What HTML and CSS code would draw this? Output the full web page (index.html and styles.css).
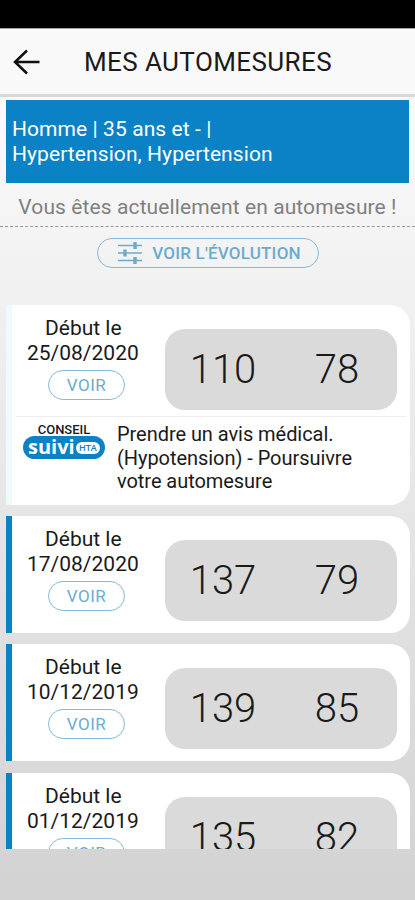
FILE: index.html
```html
<!DOCTYPE html>
<html lang="fr">
<head>
  <meta charset="UTF-8">
  <title>Mes automesures</title>
  <meta name="viewport" content="width=device-width, initial-scale=1.0">
  <link rel="stylesheet" href="styles.css">
</head>
<body>
  <div class="status-bar"></div>

  <!-- Header -->
  <header class="header">
    <svg class="back" viewBox="0 0 28 28" width="28" height="28">
      <path d="M27.500 14H3M15 2.500L3 14L15 25.500" fill="none" stroke="#111" stroke-width="2.500"/>
    </svg>
    <h1>MES AUTOMESURES</h1>
  </header>

  <!-- Patient profile -->
  <div class="profile">Homme | 35 ans et - |<br><span>Hypertension, Hypertension</span></div>
  <p class="notice">Vous êtes actuellement en automesure !</p>

  <div class="evolution">
    <button class="btn btn-evolution">
      <svg viewBox="0 0 24 24" width="24" height="24" stroke="currentColor" fill="none">
        <path d="M0 4.500H24M0 12H24M0 19.500H24" stroke-width="1.600"/>
        <path d="M17 1V8M7 8.500V15.500M17 16V23" stroke-width="3.400"/>
      </svg>
      <span>VOIR L'ÉVOLUTION</span>
    </button>
  </div>

  <!-- Measure list -->
  <main class="list">
    <div class="card current">
      <div class="measure">
        <div class="date">Début le<br><span>25/08/2020</span><button class="btn">VOIR</button></div>
        <div class="values"><span>110</span><span>78</span></div>
      </div>
      <div class="advice">
        <div class="logo">
          <div class="logo-top">CONSEIL</div>
          <div class="logo-name">suivi<span>HTA</span></div>
        </div>
        <p>Prendre un avis médical.<br>(Hypotension) - Poursuivre<br>votre automesure</p>
      </div>
    </div>

    <div class="card">
      <div class="measure">
        <div class="date">Début le<br><span>17/08/2020</span><button class="btn">VOIR</button></div>
        <div class="values"><span>137</span><span>79</span></div>
      </div>
    </div>

    <div class="card">
      <div class="measure">
        <div class="date">Début le<br><span>10/12/2019</span><button class="btn">VOIR</button></div>
        <div class="values"><span>139</span><span>85</span></div>
      </div>
    </div>

    <div class="card">
      <div class="measure">
        <div class="date">Début le<br><span>01/12/2019</span><button class="btn">VOIR</button></div>
        <div class="values"><span>135</span><span>82</span></div>
      </div>
    </div>
  </main>
</body>
</html>
```
FILE: styles.css
```css
* {
  box-sizing: border-box;
}
body {
  margin: 0;
  height: 900px;
  overflow: hidden;
  font-family: Roboto, sans-serif;
  color: #1a1a1a;
  background: linear-gradient(#fafafa 95px, #f3f3f3 250px, #d2d2d2 900px);
}
.status-bar {
  height: 28px;
  background: #000;
}

/* Header */
.header {
  display: flex;
  align-items: center;
  height: 69px;
  padding-left: 12px;
  background: #f9f9f9;
  border-top: 1px solid #a5a5a5;
  border-bottom: 3px solid #d8d8d8;
}
.header h1 {
  margin: 0 0 0 44px;
  font-size: 26px;
  font-weight: 400;
  letter-spacing: 0.400px;
}

/* Profile */
.profile {
  height: 83px;
  margin: 3px 6px 0;
  padding: 17px 6px;
  font-size: 21px;
  line-height: 25px;
  letter-spacing: 0.080px;
  color: #fff;
  background: #0a82c5;
}
.notice {
  height: 44px;
  margin: 0;
  padding-top: 12px;
  text-align: center;
  white-space: nowrap;
  font-size: 21px;
  line-height: 25px;
  letter-spacing: 0.100px;
  color: #808080;
  border-bottom: 1px dashed #999;
}
.evolution {
  height: 78px;
  padding-top: 11px;
  text-align: center;
}

/* Buttons */
.btn {
  display: block;
  width: 77px;
  height: 30px;
  margin: 4px 0 0 36px;
  padding: 0;
  font-family: inherit;
  font-size: 17px;
  letter-spacing: 0.500px;
  color: #6cabcf;
  background: none;
  border: 1px solid #85b9d5;
  border-radius: 15px;
}
.btn-evolution {
  display: flex;
  align-items: center;
  justify-content: center;
  gap: 10px;
  width: 222px;
  margin: 0 0 0 97px;
  padding-left: 3px;
  font-weight: 500;
  letter-spacing: 0.200px;
}

/* Cards */
.list {
  height: 544px;
  overflow: hidden;
}
.card {
  margin: 0 5.500px 11.500px 6px;
  background: #fff;
  border-left: 6px solid #0a82c5;
  border-radius: 0 20px 20px 0;
}
.current {
  height: 199.500px;
  border-left-color: #effafc;
}
.measure {
  display: flex;
  height: 116.900px;
}
.current .measure {
  height: 111px;
}
.date {
  width: 153px;
  padding-top: 11px;
  font-size: 21px;
  line-height: 25px;
  text-indent: 33px;
}
.date span {
  display: block;
  text-indent: 15px;
}
.date br {
  display: none;
}
.date .btn {
  text-indent: 0;
}
.values {
  display: flex;
  width: 232px;
  height: 81px;
  margin-top: 24px;
  font-size: 40px;
  line-height: 81px;
  font-weight: 300;
  text-align: center;
  background: #dadada;
  border-radius: 20px;
}
.values span {
  width: 116px;
}
.values span:last-child {
  width: 112px;
}

/* Advice */
.advice {
  display: flex;
  margin: 0 4px;
  border-top: 1px solid #eee;
}
.advice p {
  margin: 6px 0 0 12px;
  font-size: 20px;
  line-height: 23.500px;
  letter-spacing: -0.050px;
  white-space: nowrap;
}
.logo {
  width: 82px;
  margin: 7px 0 0 7px;
}
.logo-top {
  text-align: center;
  font-size: 13px;
  line-height: 12px;
  font-weight: 500;
}
.logo-name {
  display: flex;
  align-items: center;
  height: 23px;
  padding: 0 5px 2px;
  font-family: "Open Sans", sans-serif;
  font-size: 20px;
  line-height: 21px;
  font-weight: 700;
  color: #fff;
  background: #0a82c5;
  border-radius: 12px;
}
.logo-name span {
  width: 26px;
  height: 12px;
  margin: 2px 0 0 1px;
  text-align: center;
  font-size: 9px;
  font-weight: 600;
  line-height: 12px;
  color: #0a82c5;
  background: #fff;
  border-radius: 6px;
}
```
